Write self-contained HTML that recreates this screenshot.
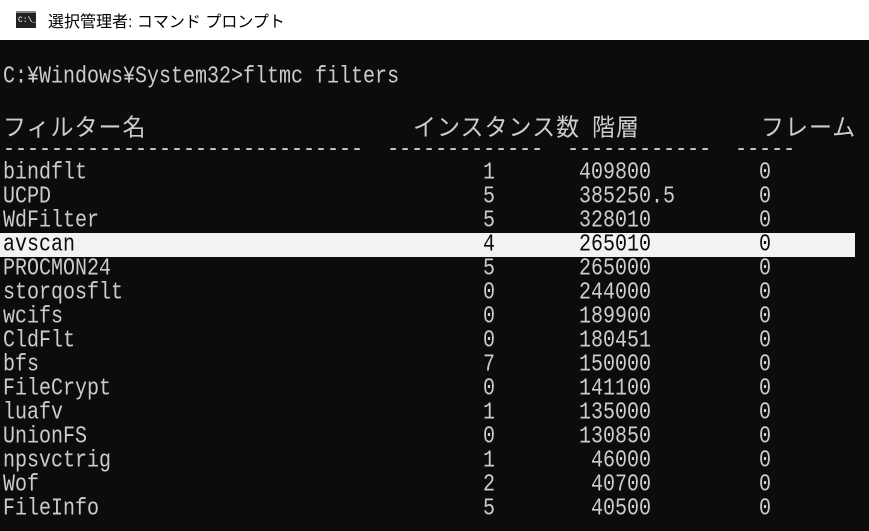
<!DOCTYPE html>
<html><head><meta charset="utf-8"><style>
body{margin:0;width:869px;height:531px;overflow:hidden;background:#0c0c0c;position:relative;font-family:"Liberation Mono","Noto Sans CJK JP",monospace;color:#cccccc}
.title{position:absolute;left:0;top:0;width:869px;height:40px;background:#fff;color:#000;font-family:"Liberation Sans","Noto Sans CJK JP",sans-serif;font-size:16px}
.title span{position:absolute;left:48px;top:8px}
.icon{position:absolute;left:16px;top:11px;width:20px;height:15px;background:#222;border-top:2px solid #888}
.icon i{position:absolute;left:2px;top:3px;color:#fff;font-size:8px;font-style:normal;font-family:"Liberation Mono",monospace}
.l{position:absolute;height:24px;line-height:24px;font-size:20px;white-space:pre;transform:scaleY(1.18);transform-origin:50% 50%}
.hl{position:absolute;left:0;top:233px;width:855px;height:24px;background:#f2f2f2}
.j{font-family:"Noto Sans CJK JP",sans-serif;font-size:23px;transform:scaleY(1.05)}
</style></head><body>
<div class="title"><div class="icon"><i>C:\_</i></div><span>選択管理者: コマンド プロンプト</span></div>
<div class="hl"></div>
<div class="l" style="left:3px;top:66px">C:¥Windows¥System32&gt;fltmc filters</div>
<div class="l j" style="left:3px;top:113px;letter-spacing:1px">フィルター名</div>
<div class="l j" style="left:413px;top:113px;letter-spacing:1px">インスタンス数</div>
<div class="l j" style="left:592px;top:113px;letter-spacing:1px">階層</div>
<div class="l j" style="left:761px;top:113px;letter-spacing:1px">フレーム</div>
<div class="l" style="left:3px;top:139px">------------------------------  -------------  ------------  -----</div>
<div id="rows"></div>
<script>
var d=[["bindflt",1,"409800"],["UCPD",5,"385250.5"],["WdFilter",5,"328010"],["avscan",4,"265010"],["PROCMON24",5,"265000"],["storqosflt",0,"244000"],["wcifs",0,"189900"],["CldFlt",0,"180451"],["bfs",7,"150000"],["FileCrypt",0,"141100"],["luafv",1,"135000"],["UnionFS",0,"130850"],["npsvctrig",1,"46000"],["Wof",2,"40700"],["FileInfo",5,"40500"]];
var h="";d.forEach(function(r,i){var t=162+24*i,c=i==3?"color:#0c0c0c;":"";var a=r[2].length==5?591:579;
h+='<div class="l" style="'+c+'left:3px;top:'+t+'px">'+r[0]+'</div><div class="l" style="'+c+'left:483px;top:'+t+'px">'+r[1]+'</div><div class="l" style="'+c+'left:'+a+'px;top:'+t+'px">'+r[2]+'</div><div class="l" style="'+c+'left:759px;top:'+t+'px">0</div>';});
document.getElementById("rows").innerHTML=h;
</script>
</body></html>
